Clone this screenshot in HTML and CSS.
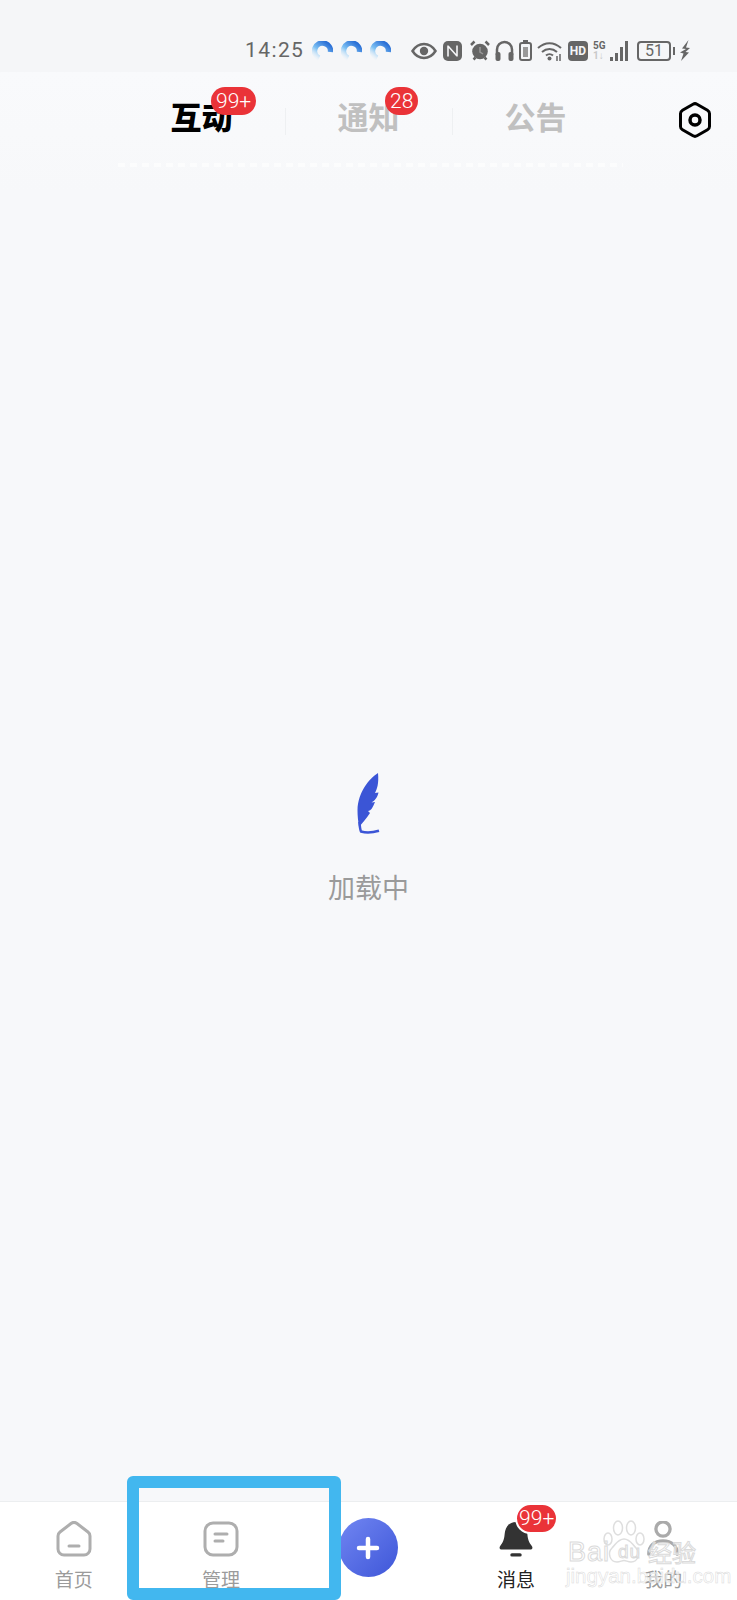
FILE: index.html
```html
<!DOCTYPE html>
<html>
<head>
    <meta charset="UTF-8">
    <title>消息</title>
    <link rel="stylesheet" href="styles.css">
</head>
<body>
    <div class="page">
        <div class="status-bar">
            <span class="clock">14:25</span>
            <div class="spinners">
                <svg class="spinner" viewBox="0 0 21 20"><defs><linearGradient id="spin" gradientUnits="userSpaceOnUse" x1="5" y1="19" x2="17" y2="3"><stop offset="0" stop-color="#dcedfb" stop-opacity="0.1"/><stop offset="0.45" stop-color="#7cc0f3"/><stop offset="1" stop-color="#2a6fd6"/></linearGradient></defs><path d="M7 17.200A8 8 0 1 1 18.500 11" fill="none" stroke="url(#spin)" stroke-width="5.500"/></svg>
                <svg class="spinner" viewBox="0 0 21 20"><path d="M7 17.200A8 8 0 1 1 18.500 11" fill="none" stroke="url(#spin)" stroke-width="5.500"/></svg>
                <svg class="spinner" viewBox="0 0 21 20"><path d="M7 17.200A8 8 0 1 1 18.500 11" fill="none" stroke="url(#spin)" stroke-width="5.500"/></svg>
            </div>
            <div class="status-icons">
                <svg width="27" height="18" viewBox="0 0 27 18"><path d="M1.500 9C5 3.500 9 2 13 2s8 1.500 11.500 7C21 14.500 17 16 13 16S5 14.500 1.500 9Z" fill="none" stroke="#666" stroke-width="2.500"/><circle cx="13" cy="9" r="4.200" fill="#666"/></svg>
                <svg width="22" height="20" viewBox="0 0 22 20"><rect x="0" y="0" width="19" height="20" rx="5" fill="#666"/><path d="M5 4.500v11M14 4.500v11M5 5l9 10" fill="none" stroke="#f5f6f8" stroke-width="1.600"/></svg>
                <svg width="20" height="21" viewBox="0 0 20 21"><circle cx="10" cy="11.500" r="7.800" fill="#666"/><path d="M1 5 4.500 1.500M19 5 15.500 1.500M3.500 19.500l2-2M16.500 19.500l-2-2" stroke="#666" stroke-width="2.500"/><path d="M10 7v5l3 2" fill="none" stroke="#999" stroke-width="1.500"/></svg>
                <svg width="19" height="21" viewBox="0 0 19 21"><path d="M2 15V9.500a7.500 7.500 0 0 1 15 0V15" fill="none" stroke="#666" stroke-width="2.500"/><rect x="0.500" y="12" width="5" height="9" rx="2" fill="#666"/><rect x="13.500" y="12" width="5" height="9" rx="2" fill="#666"/></svg>
                <svg width="13" height="21" viewBox="0 0 13 21"><rect x="4" y="0" width="5" height="2" fill="#666"/><rect x="1" y="3" width="11" height="17" rx="2" fill="none" stroke="#666" stroke-width="2"/><rect x="4" y="7" width="5" height="10" fill="#999"/></svg>
                <svg width="26" height="20" viewBox="0 0 26 20"><path d="M1 7c7-6.500 16-6.500 23 0M5 11c4.500-4 10.500-4 15 0M9 14.500c2-1.800 5-1.800 7 0" fill="none" stroke="#666" stroke-width="2"/><circle cx="12.500" cy="17.500" r="2" fill="#666"/><path d="M20 15v5M23 13v7" stroke="#666" stroke-width="1.500"/></svg>
                <span class="hd">HD</span>
                <div class="five-g"><span>5G</span><span class="five-g-sub">1↓</span></div>
                <div class="signal"><i class="bar-1"></i><i class="bar-2"></i><i class="bar-3"></i><i class="bar-4"></i></div>
                <div class="battery"><span class="battery-body">51</span><i class="battery-nub"></i></div>
                <svg width="10" height="21" viewBox="0 0 10 21"><path d="M8.500 0 2 8.500l4 .5-6 3.500 3.500 1L1 21l8-8.500-3.500-.5L10 8 6 7.500Z" fill="#666"/></svg>
            </div>
        </div>

        <div class="header">
            <div class="tabs">
                <div class="tab tab-active">互动<span class="badge badge-wide">99+</span></div>
                <div class="tab">通知<span class="badge">28</span></div>
                <div class="tab">公告</div>
            </div>
            <div class="settings">
                <svg width="32" height="36" viewBox="0 0 32 36"><path d="M14 2.200a4 4 0 0 1 4 0l10.500 6a4 4 0 0 1 2 3.400v12.800a4 4 0 0 1-2 3.400L18 33.800a4 4 0 0 1-4 0L3.500 27.800a4 4 0 0 1-2-3.400V11.600a4 4 0 0 1 2-3.400Z" fill="none" stroke="#000" stroke-width="3"/><circle cx="16" cy="18" r="5" fill="none" stroke="#000" stroke-width="3.500"/></svg>
            </div>
            <div class="dots"></div>
        </div>

        <div class="content">
            <svg class="feather" width="24" height="64" viewBox="0 0 24 64">
                <path d="M21 1C12 7 1 20 .5 38c0 6 .5 10 1.500 17C6 50 10 46 13 41l-2-2c3 0 5-4 7-9l-3.500.5c3-1.500 6-5 7-10l-3.500.5C20 17 22 12 21 1Z" fill="#3b55d6"/>
                <path d="M2.500 50c.2 4 .4 7 1.500 9.500 5 1.500 12 1 18-.8" fill="none" stroke="#3b55d6" stroke-width="2.500"/>
            </svg>
            <div class="loading-text">加载中</div>
        </div>

        <div class="tabbar">
            <div class="nav-item">
                <svg class="nav-icon" viewBox="0 0 36 36"><path d="M15 2.500a5 5 0 0 1 6 0l11 8.500a5 5 0 0 1 2 4V28a6 6 0 0 1-6 6H8a6 6 0 0 1-6-6V15a5 5 0 0 1 2-4Z" fill="none" stroke="#aeaeae" stroke-width="3"/><path d="M13 25h10" stroke="#aeaeae" stroke-width="3" stroke-linecap="round"/></svg>
                <span class="nav-label">首页</span>
            </div>
            <div class="nav-item">
                <svg class="nav-icon" viewBox="0 0 36 36"><rect x="2" y="2" width="32" height="32" rx="8" fill="none" stroke="#aeaeae" stroke-width="3"/><path d="M12 13h12M12 20h8" stroke="#aeaeae" stroke-width="3" stroke-linecap="round"/></svg>
                <span class="nav-label">管理</span>
            </div>
            <div class="nav-item nav-add">
                <div class="add-btn"><svg width="24" height="24" viewBox="0 0 24 24"><path d="M12 3v18M3 12h18" stroke="#fff" stroke-width="4.500" stroke-linecap="round"/></svg></div>
            </div>
            <div class="nav-item nav-active">
                <svg class="nav-icon" viewBox="0 0 36 38"><path d="M18 1C10 1 6.500 7 6 14c-.5 6-2 9-4.500 12-1.500 2-1 4 1.500 4h30c2.500 0 3-2 1.500-4C32 23 30.500 20 30 14 29.500 7 26 1 18 1Z" fill="#333"/><rect x="12" y="34" width="12" height="3.500" rx="1.700" fill="#333"/></svg>
                <span class="nav-label">消息</span>
                <span class="badge badge-nav">99+</span>
            </div>
            <div class="nav-item">
                <svg class="nav-icon" viewBox="0 0 36 38"><circle cx="18" cy="8.500" r="7.500" fill="none" stroke="#aaa" stroke-width="3.500"/><path d="M3 35c0-9 6-14 15-14s15 5 15 14" fill="none" stroke="#aaa" stroke-width="3.500" stroke-linecap="round"/></svg>
                <span class="nav-label">我的</span>
            </div>
        </div>

        <!-- annotation frame and watermark sit on top of the screenshot -->
        <div class="highlight"></div>
        <div class="watermark">
            <svg class="paw" width="42" height="44" viewBox="0 0 42 44"><g fill="rgba(255,255,255,0.55)" stroke="#dedede" stroke-width="1.500"><ellipse cx="5" cy="19" rx="4" ry="6"/><ellipse cx="15" cy="8" rx="4.500" ry="7"/><ellipse cx="28" cy="8" rx="4.500" ry="7"/><ellipse cx="37" cy="19" rx="4" ry="6"/><path d="M21 19c-6 0-8 5-12 9-5 5-2 14 5 14 3 0 5-1.500 7-1.500s4 1.500 7 1.500c7 0 10-9 5-14-4-4-6-9-12-9Z"/></g></svg>
            <div class="wm-logo"><span class="wm-bai">Bai</span><span class="wm-du">du</span><span class="wm-jy">经验</span></div>
            <div class="wm-url">jingyan.baidu.com</div>
        </div>
    </div>
</body>
</html>
```

FILE: styles.css
```css
* {
    box-sizing: border-box;
}

body {
    margin: 0;
    font-family: "Noto Sans CJK SC", "Noto Sans", sans-serif;
    background: #f7f8fa;
}

.page {
    position: relative;
    width: 737px;
    height: 1600px;
    overflow: hidden;
    display: flex;
    flex-direction: column;
}

/* status bar */
.status-bar {
    height: 72px;
    flex-shrink: 0;
    padding: 38px 0 0 245px;
    background: #f5f6f8;
    display: flex;
    align-items: flex-start;
    color: #666;
}

.clock {
    font-family: Roboto, sans-serif;
    font-size: 21px;
    line-height: 25px;
    letter-spacing: 1.4px;
    width: 67px;
}

.spinners {
    display: flex;
    gap: 8px;
    width: 99px;
    padding-top: 3px;
}

.spinner {
    width: 21px;
    height: 20px;
}

.status-icons {
    display: flex;
    align-items: center;
    gap: 5px;
    height: 25px;
}

.hd {
    width: 20px;
    height: 20px;
    border-radius: 4px;
    background: #666;
    color: #f5f6f8;
    font-family: Roboto, sans-serif;
    font-size: 12px;
    font-weight: 700;
    line-height: 20px;
    text-align: center;
}

.five-g {
    width: 12px;
    display: flex;
    flex-direction: column;
    font-family: Roboto, sans-serif;
    font-size: 10px;
    font-weight: 700;
    line-height: 10px;
}

.five-g-sub {
    color: #c8c8c8;
}

.signal {
    display: flex;
    align-items: flex-end;
    gap: 2px;
    height: 20px;
    margin-right: 4px;
}

.signal i {
    width: 3px;
    background: #666;
}

.bar-1 { height: 4px; }
.bar-2 { height: 8px; }
.bar-3 { height: 14px; }
.bar-4 { height: 20px; }

.battery {
    display: flex;
    align-items: center;
    gap: 2px;
}

.battery-body {
    width: 34px;
    height: 20px;
    border: 2px solid #666;
    border-radius: 4px;
    font-family: Roboto, sans-serif;
    font-size: 16px;
    line-height: 16px;
    text-align: center;
}

.battery-nub {
    width: 2px;
    height: 8px;
    background: #666;
}

/* header with tabs */
.header {
    position: relative;
    height: 120px;
    flex-shrink: 0;
    padding-top: 22px;
    background: linear-gradient(#f9fafc, #f7f8fa);
    display: grid;
    grid-template-columns: 118px 501px 118px;
    align-items: start;
}

.tabs {
    grid-column: 2;
    display: grid;
    grid-template-columns: repeat(3, 1fr);
}

.tab {
    position: relative;
    height: 44px;
    font-size: 31px;
    font-weight: 700;
    line-height: 44px;
    text-align: center;
    color: #c0c0c0;
}

.tab + .tab::before {
    content: "";
    position: absolute;
    left: 0;
    top: 14px;
    height: 27px;
    border-left: 1px solid #eef0f2;
}

.tab-active {
    color: #000;
    font-weight: 900;
}

.badge {
    position: absolute;
    top: -7px;
    left: 100px;
    min-width: 33px;
    height: 28px;
    padding: 0 5px;
    border-radius: 14px;
    background: #ea3338;
    color: #fff;
    font-family: Roboto, sans-serif;
    font-size: 21px;
    font-weight: 300;
    line-height: 28px;
    text-align: center;
}

.badge-wide {
    left: 93px;
    width: 45px;
}

.settings {
    grid-column: 3;
    padding: 8px 0 0 60px;
}

.settings svg {
    display: block;
}

.dots {
    position: absolute;
    top: 91px;
    left: 118px;
    width: 505px;
    height: 4px;
    background: repeating-linear-gradient(90deg, rgba(255, 255, 255, 0.6) 0 7px, transparent 7px 12px);
}

/* loading */
.content {
    flex: 1;
    padding-top: 580px;
    display: flex;
    flex-direction: column;
    align-items: center;
}

.feather {
    margin-bottom: 33px;
}

.loading-text {
    font-size: 27px;
    line-height: 36px;
    color: #9a9a9a;
}

/* bottom tabs */
.tabbar {
    height: 99px;
    flex-shrink: 0;
    background: #fff;
    border-top: 1px solid #eceef0;
    display: grid;
    grid-template-columns: repeat(5, 1fr);
}

.nav-item {
    position: relative;
    padding-top: 19px;
    display: flex;
    flex-direction: column;
    align-items: center;
}

.nav-icon {
    width: 36px;
    height: 36px;
}

.nav-label {
    margin-top: 9px;
    font-size: 19px;
    line-height: 26px;
    color: #9b9b9b;
}

.nav-active .nav-label {
    color: #222;
}

.nav-add {
    padding-top: 16px;
}

.add-btn {
    width: 59px;
    height: 59px;
    border-radius: 50%;
    background: linear-gradient(135deg, #7186f2, #3e56d8);
    display: flex;
    align-items: center;
    justify-content: center;
}

.badge-nav {
    top: 1px;
    left: 73px;
    width: 43px;
    height: 31px;
    border: 2px solid #fff;
    border-radius: 16px;
    line-height: 27px;
    font-size: 21px;
    padding: 0;
}

/* overlays */
.highlight {
    position: absolute;
    left: 127px;
    top: 1476px;
    width: 214px;
    height: 124px;
    border: 12px solid #42b7ef;
    border-radius: 6px;
}

.watermark {
    position: absolute;
    left: 565px;
    top: 1520px;
    width: 134px;
    height: 64px;
    color: rgba(255, 255, 255, 0.55);
}

.paw {
    position: absolute;
    left: 38px;
    top: 0;
}

.wm-logo {
    position: absolute;
    left: 3px;
    top: 16px;
    display: flex;
    align-items: center;
    font-family: "Liberation Sans", sans-serif;
    font-size: 27px;
    line-height: 32px;
    letter-spacing: 1px;
    white-space: nowrap;
    -webkit-text-stroke: 1px #dadada;
}

.wm-du {
    margin-left: 8px;
    font-size: 19px;
    width: 26px;
}

.wm-jy {
    margin-left: 4px;
    font-family: "Noto Sans CJK SC", sans-serif;
    font-size: 24px;
    letter-spacing: 0;
}

.wm-url {
    position: absolute;
    left: 1px;
    top: 47px;
    font-family: "Liberation Sans", sans-serif;
    font-size: 20.500px;
    line-height: 18px;
    white-space: nowrap;
    -webkit-text-stroke: 0.5px #dadada;
}
```
